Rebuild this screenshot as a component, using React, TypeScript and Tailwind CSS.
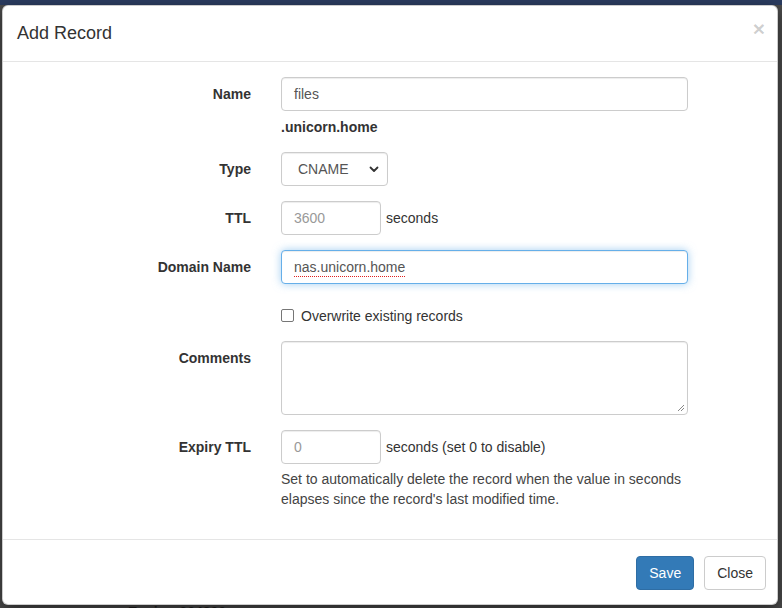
import React from "react";

function Label({ children }: { children: React.ReactNode }) {
  return (
    <div className="w-[248px] shrink-0 pt-[7px] text-right font-bold leading-5 text-[#333]">
      {children}
    </div>
  );
}

function TextBox({
  value,
  placeholder,
  className = "",
  focused = false,
  spell = false,
}: {
  value?: string;
  placeholder?: string;
  className?: string;
  focused?: boolean;
  spell?: boolean;
}) {
  const border = focused
    ? "border-[#66afe9] shadow-[inset_0_1px_1px_rgba(0,0,0,0.075),0_0_8px_rgba(102,175,233,0.6)]"
    : "border-[#ccc] shadow-[inset_0_1px_1px_rgba(0,0,0,0.075)]";
  return (
    <div
      className={`flex h-[34px] items-center rounded-[4px] border bg-white px-[12px] leading-5 ${border} ${className}`}
    >
      {value ? (
        <span
          className={
            spell
              ? "text-[#555] underline decoration-dotted decoration-[#e0201f] decoration-1 underline-offset-[4px]"
              : "text-[#555]"
          }
        >
          {value}
        </span>
      ) : (
        <span className="text-[#999]">{placeholder}</span>
      )}
    </div>
  );
}

export default function App() {
  return (
    <div className="h-[608px] w-[782px] overflow-hidden bg-[#4b4b4b] font-['Liberation_Sans',Arial,sans-serif] text-[14px] text-[#333]">
      <div className="h-[5px] bg-[#2b3c60]" />
      <div className="ml-[2px] flex h-[600px] w-[776px] flex-col rounded-[6px] border border-black/20 bg-white shadow-[0_5px_15px_rgba(0,0,0,0.5)]">
        {/* header */}
        <div className="flex items-start justify-between border-b border-[#e5e5e5] pb-[15px] pl-[14px] pr-[12px] pt-[15px]">
          <h4 className="text-[18px] leading-[25px] text-[#333]">Add Record</h4>
          <span className="-mt-[3px] text-[21px] font-bold leading-[21px] text-black/20">×</span>
        </div>

        {/* body */}
        <div className="flex flex-1 flex-col pt-[15px]">
          <div className="mb-[15px] flex">
            <Label>Name</Label>
            <div className="ml-[30px] w-[407px]">
              <TextBox value="files" />
              <div className="mt-[6px] font-bold leading-5 text-[#333]">.unicorn.home</div>
            </div>
          </div>

          <div className="mb-[15px] flex">
            <Label>Type</Label>
            <div className="ml-[30px] flex h-[34px] w-[107px] items-center justify-between rounded-[4px] border border-[#ccc] bg-white pl-[16px] pr-[8px] text-[#555] shadow-[inset_0_1px_1px_rgba(0,0,0,0.075)]">
              <span>CNAME</span>
              <svg width="10" height="7" viewBox="0 0 10 7" fill="none">
                <path d="M1.5 1.5 L5 5 L8.5 1.5" stroke="#333" strokeWidth="1.8" strokeLinecap="round" strokeLinejoin="round" />
              </svg>
            </div>
          </div>

          <div className="mb-[15px] flex">
            <Label>TTL</Label>
            <div className="ml-[30px] flex items-center">
              <TextBox placeholder="3600" className="w-[100px]" />
              <span className="ml-[5px]">seconds</span>
            </div>
          </div>

          <div className="mb-[15px] flex">
            <Label>Domain Name</Label>
            <div className="ml-[30px] w-[407px]">
              <TextBox value="nas.unicorn.home" focused spell />
            </div>
          </div>

          <div className="mb-[15px] flex">
            <div className="w-[248px] shrink-0" />
            <div className="ml-[30px] flex h-[27px] items-end">
              <div className="flex h-5 items-center">
                <span className="mb-[1px] h-[13px] w-[13px] rounded-[2px] border border-[#767676] bg-white" />
                <span className="ml-[7px] leading-5">Overwrite existing records</span>
              </div>
            </div>
          </div>

          <div className="mb-[15px] flex">
            <Label>Comments</Label>
            <div className="relative ml-[30px] h-[74px] w-[407px] rounded-[4px] border border-[#ccc] bg-white shadow-[inset_0_1px_1px_rgba(0,0,0,0.075)]">
              <svg className="absolute bottom-[2px] right-[2px]" width="8" height="8" viewBox="0 0 8 8">
                <path d="M7 1 L1 7 M7 4 L4 7" stroke="#888" strokeWidth="1" />
              </svg>
            </div>
          </div>

          <div className="flex">
            <Label>Expiry TTL</Label>
            <div className="ml-[30px] w-[407px]">
              <div className="flex items-center">
                <TextBox placeholder="0" className="w-[100px]" />
                <span className="ml-[5px]">seconds (set 0 to disable)</span>
              </div>
              <p className="mt-[5px] leading-5 text-[#444]">
                Set to automatically delete the record when the value in seconds elapses since the
                record's last modified time.
              </p>
            </div>
          </div>
        </div>

        {/* footer */}
        <div className="flex justify-end gap-[10px] border-t border-[#e5e5e5] pb-[14px] pr-[11px] pt-[16px]">
          <button className="h-[34px] rounded-[4px] border border-[#2e6da4] bg-[#337ab7] px-[12px] leading-5 text-white">
            Save
          </button>
          <button className="h-[34px] rounded-[4px] border border-[#ccc] bg-white px-[12px] leading-5 text-[#333]">
            Close
          </button>
        </div>
      </div>
      <div className="ml-[128px] font-bold leading-[14px] text-[#151515]">Expiry: 604800</div>
    </div>
  );
}
